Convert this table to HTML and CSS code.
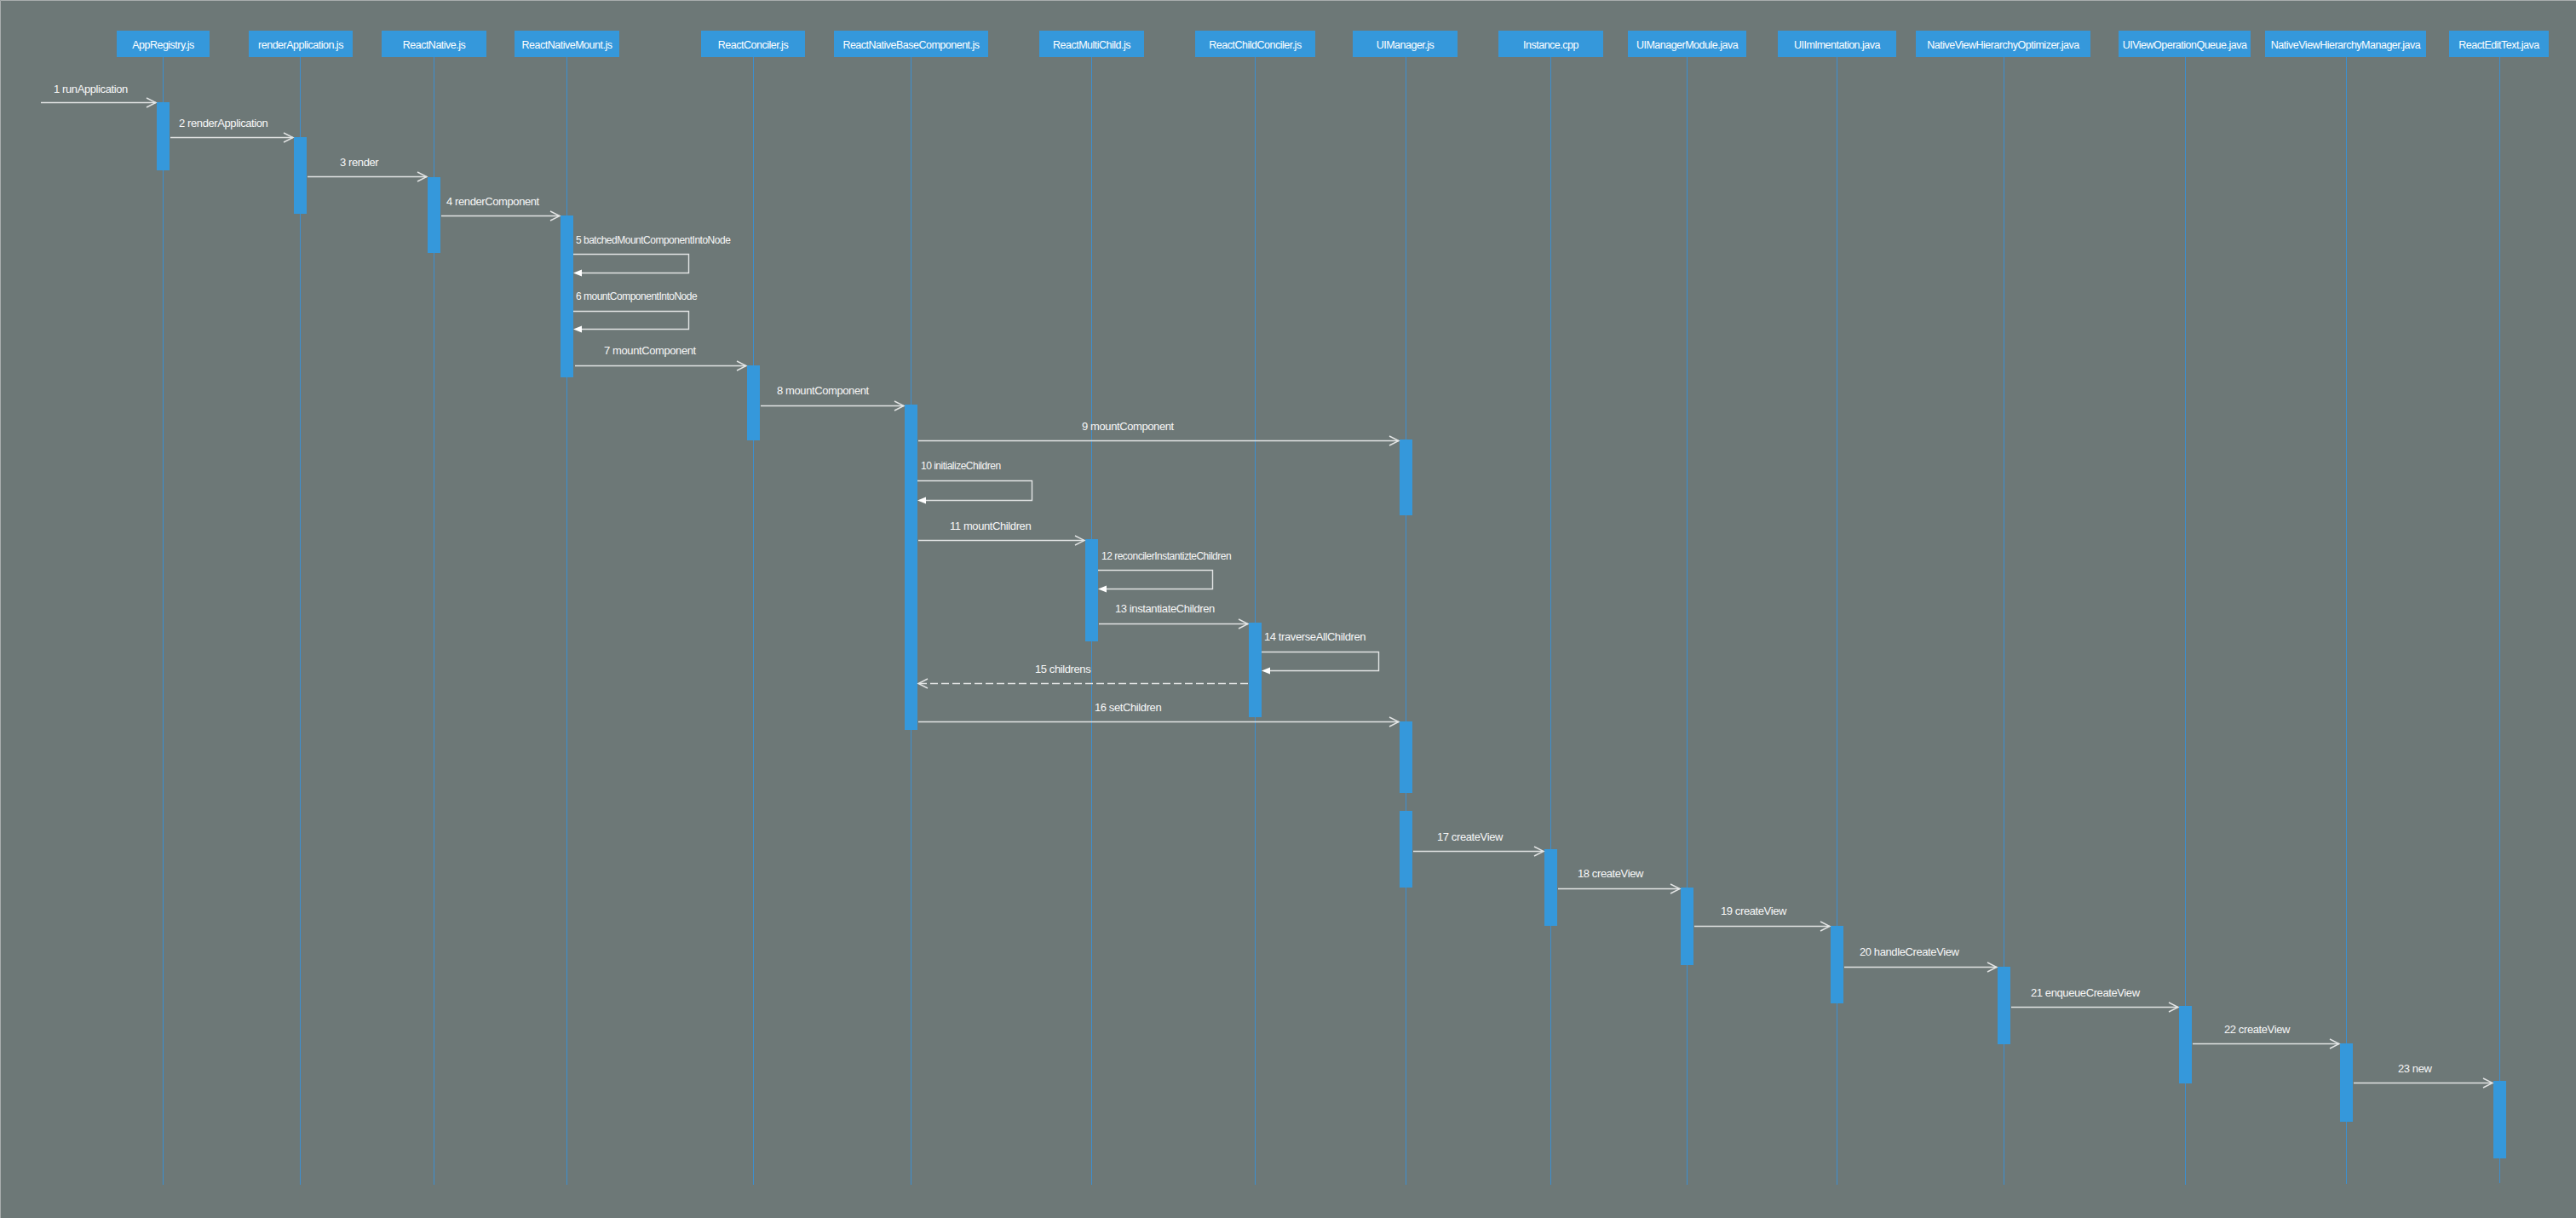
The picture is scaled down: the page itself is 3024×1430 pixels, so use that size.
FILE: index.html
```html
<!DOCTYPE html>
<html lang="en">
<head>
<meta charset="utf-8">
<title>React Native createView sequence</title>
<link rel="stylesheet" href="styles.css">
</head>
<body>
<main class="page">
<svg class="diagram" width="3024" height="1430" viewBox="0 0 3024 1430" xmlns="http://www.w3.org/2000/svg">
  <path class="frame" d="M0.5 1430 V0.5 H3024"/>

  <!-- lifelines -->
  <g class="lifelines">
    <line x1="191.5" y1="67" x2="191.5" y2="1391"/>
    <line x1="352.5" y1="67" x2="352.5" y2="1391"/>
    <line x1="509.5" y1="67" x2="509.5" y2="1391"/>
    <line x1="665.5" y1="67" x2="665.5" y2="1391"/>
    <line x1="884.5" y1="67" x2="884.5" y2="1391"/>
    <line x1="1069.5" y1="67" x2="1069.5" y2="1391"/>
    <line x1="1281.5" y1="67" x2="1281.5" y2="1391"/>
    <line x1="1473.5" y1="67" x2="1473.5" y2="1391"/>
    <line x1="1650.5" y1="67" x2="1650.5" y2="1391"/>
    <line x1="1820.5" y1="67" x2="1820.5" y2="1391"/>
    <line x1="1980.5" y1="67" x2="1980.5" y2="1391"/>
    <line x1="2156.5" y1="67" x2="2156.5" y2="1391"/>
    <line x1="2352.5" y1="67" x2="2352.5" y2="1391"/>
    <line x1="2565.5" y1="67" x2="2565.5" y2="1391"/>
    <line x1="2754.5" y1="67" x2="2754.5" y2="1390"/>
    <line x1="2934.5" y1="67" x2="2934.5" y2="1389"/>
  </g>

  <!-- participants -->
  <g class="actors">
    <rect x="137" y="36" width="109" height="31"/>
    <rect x="292" y="36" width="122" height="31"/>
    <rect x="448" y="36" width="123" height="31"/>
    <rect x="604" y="36" width="123" height="31"/>
    <rect x="823" y="36" width="122" height="31"/>
    <rect x="979" y="36" width="181" height="31"/>
    <rect x="1220" y="36" width="123" height="31"/>
    <rect x="1403" y="36" width="141" height="31"/>
    <rect x="1588" y="36" width="123" height="31"/>
    <rect x="1759" y="36" width="123" height="31"/>
    <rect x="1911" y="36" width="139" height="31"/>
    <rect x="2087" y="36" width="139" height="31"/>
    <rect x="2249" y="36" width="205" height="31"/>
    <rect x="2487" y="36" width="155" height="31"/>
    <rect x="2659" y="36" width="189" height="31"/>
    <rect x="2875" y="36" width="117" height="31"/>
  </g>
  <g class="actor-labels">
    <text x="191.5" y="56.5">AppRegistry.js</text>
    <text x="353" y="56.5">renderApplication.js</text>
    <text x="509.5" y="56.5">ReactNative.js</text>
    <text x="665.5" y="56.5">ReactNativeMount.js</text>
    <text x="884" y="56.5">ReactConciler.js</text>
    <text x="1069.5" y="56.5">ReactNativeBaseComponent.js</text>
    <text x="1281.5" y="56.5">ReactMultiChild.js</text>
    <text x="1473.5" y="56.5">ReactChildConciler.js</text>
    <text x="1649.5" y="56.5">UIManager.js</text>
    <text x="1820.5" y="56.5">Instance.cpp</text>
    <text x="1980.5" y="56.5">UIManagerModule.java</text>
    <text x="2156.5" y="56.5">UIImlmentation.java</text>
    <text x="2351.5" y="56.5">NativeViewHierarchyOptimizer.java</text>
    <text x="2564.5" y="56.5">UIViewOperationQueue.java</text>
    <text x="2753.5" y="56.5">NativeViewHierarchyManager.java</text>
    <text x="2933.5" y="56.5">ReactEditText.java</text>
  </g>

  <!-- activation bars -->
  <g class="activations">
    <rect x="184" y="120" width="15" height="80"/>
    <rect x="345" y="161" width="15" height="90"/>
    <rect x="502" y="208" width="15" height="89"/>
    <rect x="658" y="253" width="15" height="190"/>
    <rect x="877" y="429" width="15" height="88"/>
    <rect x="1062" y="475" width="15" height="382"/>
    <rect x="1643" y="516" width="15" height="89"/>
    <rect x="1274" y="633" width="15" height="120"/>
    <rect x="1466" y="731" width="15" height="111"/>
    <rect x="1643" y="847" width="15" height="84"/>
    <rect x="1643" y="952" width="15" height="90"/>
    <rect x="1813" y="997" width="15" height="90"/>
    <rect x="1973" y="1042" width="15" height="91"/>
    <rect x="2149" y="1087" width="15" height="91"/>
    <rect x="2345" y="1135" width="15" height="91"/>
    <rect x="2558" y="1181" width="15" height="91"/>
    <rect x="2747" y="1225" width="15" height="92"/>
    <rect x="2927" y="1269" width="15" height="91"/>
  </g>

  <!-- messages -->
  <g class="messages">
    <line x1="48" y1="120.5" x2="183" y2="120.5"/>
    <polyline class="head" points="172,115 183,120.5 172,126"/>
    <line x1="200" y1="161.5" x2="344" y2="161.5"/>
    <polyline class="head" points="333,156 344,161.5 333,167"/>
    <line x1="361" y1="207.5" x2="501" y2="207.5"/>
    <polyline class="head" points="490,202 501,207.5 490,213"/>
    <line x1="518" y1="253.5" x2="657" y2="253.5"/>
    <polyline class="head" points="646,248 657,253.5 646,259"/>

    <path d="M673 298.5 H808.5 V320.5 H683"/>
    <polygon class="fill-head" points="673,320.5 683,316.5 683,324.5"/>
    <path d="M673 365.5 H808.5 V386.5 H683"/>
    <polygon class="fill-head" points="673,386.5 683,382.5 683,390.5"/>

    <line x1="675" y1="429.5" x2="876" y2="429.5"/>
    <polyline class="head" points="865,424 876,429.5 865,435"/>
    <line x1="893" y1="476.5" x2="1061" y2="476.5"/>
    <polyline class="head" points="1050,471 1061,476.5 1050,482"/>
    <line x1="1078" y1="517.5" x2="1642" y2="517.5"/>
    <polyline class="head" points="1631,512 1642,517.5 1631,523"/>

    <path d="M1077 564.5 H1211.5 V587.5 H1087"/>
    <polygon class="fill-head" points="1077,587.5 1087,583.5 1087,591.5"/>

    <line x1="1078" y1="634.5" x2="1273" y2="634.5"/>
    <polyline class="head" points="1262,629 1273,634.5 1262,640"/>

    <path d="M1289 669.5 H1423.5 V691.5 H1299"/>
    <polygon class="fill-head" points="1289,691.5 1299,687.5 1299,695.5"/>

    <line x1="1290" y1="732.5" x2="1465" y2="732.5"/>
    <polyline class="head" points="1454,727 1465,732.5 1454,738"/>

    <path d="M1481 765.5 H1618.5 V787.5 H1491"/>
    <polygon class="fill-head" points="1481,787.5 1491,783.5 1491,791.5"/>

    <line class="dashed" x1="1465" y1="802.5" x2="1079" y2="802.5"/>
    <polyline class="head" points="1089,797 1078,802.5 1089,808"/>

    <line x1="1078" y1="847.5" x2="1642" y2="847.5"/>
    <polyline class="head" points="1631,842 1642,847.5 1631,853"/>
    <line x1="1659" y1="999.5" x2="1812" y2="999.5"/>
    <polyline class="head" points="1801,994 1812,999.5 1801,1005"/>
    <line x1="1829" y1="1043.5" x2="1972" y2="1043.5"/>
    <polyline class="head" points="1961,1038 1972,1043.5 1961,1049"/>
    <line x1="1989" y1="1087.5" x2="2148" y2="1087.5"/>
    <polyline class="head" points="2137,1082 2148,1087.5 2137,1093"/>
    <line x1="2165" y1="1135.5" x2="2344" y2="1135.5"/>
    <polyline class="head" points="2333,1130 2344,1135.5 2333,1141"/>
    <line x1="2361" y1="1182.5" x2="2557" y2="1182.5"/>
    <polyline class="head" points="2546,1177 2557,1182.5 2546,1188"/>
    <line x1="2574" y1="1225.5" x2="2746" y2="1225.5"/>
    <polyline class="head" points="2735,1220 2746,1225.5 2735,1231"/>
    <line x1="2763" y1="1271.5" x2="2926" y2="1271.5"/>
    <polyline class="head" points="2915,1266 2926,1271.5 2915,1277"/>
  </g>

  <g class="msg-labels">
    <text x="63" y="109">1 runApplication</text>
    <text x="210" y="149">2 renderApplication</text>
    <text x="399" y="195">3 render</text>
    <text x="524" y="241">4 renderComponent</text>
    <text class="small" x="676" y="286">5 batchedMountComponentIntoNode</text>
    <text class="small" x="676" y="352">6 mountComponentIntoNode</text>
    <text x="709" y="416">7 mountComponent</text>
    <text x="912" y="463">8 mountComponent</text>
    <text x="1270" y="505">9 mountComponent</text>
    <text class="small" x="1081" y="551">10 initializeChildren</text>
    <text x="1115" y="622">11 mountChildren</text>
    <text class="small" x="1293" y="657">12 reconcilerInstantizteChildren</text>
    <text x="1309" y="719">13 instantiateChildren</text>
    <text x="1484" y="752">14 traverseAllChildren</text>
    <text x="1215" y="790">15 childrens</text>
    <text x="1285" y="835">16 setChildren</text>
    <text x="1687" y="987">17 createView</text>
    <text x="1852" y="1030">18 createView</text>
    <text x="2020" y="1074">19 createView</text>
    <text x="2183" y="1122">20 handleCreateView</text>
    <text x="2384" y="1170">21 enqueueCreateView</text>
    <text x="2611" y="1213">22 createView</text>
    <text x="2815" y="1259">23 new</text>
  </g>
</svg>
</main>
</body>
</html>
```

FILE: styles.css
```css
html, body {
  margin: 0;
  padding: 0;
  background: #6d7877;
}

.page {
  display: block;
  width: 3024px;
  height: 1430px;
  overflow: hidden;
}

.diagram {
  display: block;
  font-family: "Liberation Sans", Arial, Helvetica, sans-serif;
}

.frame {
  fill: none;
  stroke: #a9aeae;
  stroke-width: 1;
}

.lifelines line {
  stroke: #3c8fd0;
  stroke-width: 1;
}

.actors rect {
  fill: #3598db;
}

.actor-labels text {
  fill: #ffffff;
  font-size: 12.5px;
  letter-spacing: -0.5px;
  text-anchor: middle;
}

.activations rect {
  fill: #3598db;
}

.messages line,
.messages path,
.messages polyline {
  fill: none;
  stroke: #e2e4e4;
  stroke-width: 1.4;
}

.messages .dashed {
  stroke-dasharray: 9 4;
}

.messages .fill-head {
  fill: #ffffff;
  stroke: none;
}

.msg-labels text {
  fill: #f7f7f7;
  font-size: 13px;
  letter-spacing: -0.4px;
}

.msg-labels text.small {
  font-size: 12px;
  letter-spacing: -0.5px;
}
```
